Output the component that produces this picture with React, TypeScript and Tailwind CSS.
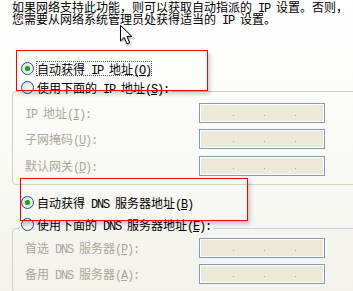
import React from "react";

// half-width latin run, ~6px per char like the dialog's bitmap font
function L({ children }: { children: React.ReactNode }) {
  return (
    <span className="whitespace-pre font-['Liberation_Mono',monospace] leading-[0px] tracking-[-1.2px]">{children}</span>
  );
}

function Radio({ checked }: { checked?: boolean }) {
  return (
    <span className="flex h-[13px] w-[13px] shrink-0 items-center justify-center rounded-full border border-[#1c5180] bg-gradient-to-br from-[#dcdcd5] to-white">
      {checked && <span className="h-[5px] w-[5px] rounded-full bg-[#21a121] shadow-[0_0_1px_#6cd86c]" />}
    </span>
  );
}

function RadioRow({
  checked,
  focused,
  children,
}: {
  checked?: boolean;
  focused?: boolean;
  children: React.ReactNode;
}) {
  return (
    <div className="flex h-[16px] items-center">
      <Radio checked={checked} />
      <span
        className={`ml-[2px] whitespace-nowrap border border-dotted leading-[13px] text-black ${
          focused ? "border-[#555]" : "border-transparent"
        }`}
      >
        {children}
      </span>
    </div>
  );
}

function IpBox() {
  return (
    <div className="flex h-[20px] w-[126px] items-end gap-[30px] border border-[#7f9db9] bg-[#ece9d8] pb-[6px] pl-[33px] shadow-[inset_0_0_0_1px_white]">
      <span className="h-[1px] w-[1px] bg-[#aca899]" />
      <span className="h-[1px] w-[1px] bg-[#aca899]" />
      <span className="h-[1px] w-[1px] bg-[#aca899]" />
    </div>
  );
}

function Field({ label, className = "" }: { label: React.ReactNode; className?: string }) {
  return (
    <div className={`flex h-[20px] items-center ${className}`}>
      <span className="w-[186px] shrink-0 whitespace-nowrap pl-[12px] text-[#aca899]">{label}</span>
      <IpBox />
    </div>
  );
}

export default function App() {
  return (
    <div className="relative h-[291px] w-[353px] overflow-hidden bg-gradient-to-b from-white via-[#fafaf8] to-[#f3f2ec] font-['Noto_Sans_CJK_SC',sans-serif] text-[12px] leading-[16px]">
      <p className="whitespace-nowrap pl-[12px] pt-[1px] leading-[12px] text-black">
        如果网络支持此功能，则可以获取自动指派的<L> IP </L>设置。否则，
        <br />
        您需要从网络系统管理员处获得适当的<L> IP </L>设置。
      </p>

      <div className="ml-[21px] mt-[35px]">
        <RadioRow checked focused>
          自动获得<L> IP </L>地址<L>(<u>O</u>)</L>
        </RadioRow>
      </div>

      <fieldset className="ml-[12px] mt-[3px] w-[360px] rounded-[4px] border border-[#d0d0bf] pb-[8px]">
        <legend className="ml-[6px] px-[2px] pb-[8px]">
          <RadioRow>
            使用下面的<L> IP </L>地址<L>(<u>S</u>):</L>
          </RadioRow>
        </legend>
        <Field label={<><L>IP </L>地址<L>(<u>I</u>):</L></>} />
        <Field className="mt-[6px]" label={<>子网掩码<L>(<u>U</u>):</L></>} />
        <Field className="mt-[7px]" label={<>默认网关<L>(<u>D</u>):</L></>} />
      </fieldset>

      <div className="ml-[21px] mt-[9px]">
        <RadioRow checked>
          自动获得<L> DNS </L>服务器地址<L>(<u>B</u>)</L>
        </RadioRow>
      </div>

      <fieldset className="ml-[12px] mt-[6px] w-[360px] rounded-[4px] border border-[#d0d0bf] pb-[8px]">
        <legend className="ml-[6px] px-[2px] pb-[8px]">
          <RadioRow>
            使用下面的<L> DNS </L>服务器地址<L>(<u>E</u>):</L>
          </RadioRow>
        </legend>
        <Field className="-mt-[2px]" label={<>首选<L> DNS </L>服务器<L>(<u>P</u>):</L></>} />
        <Field className="mt-[6px]" label={<>备用<L> DNS </L>服务器<L>(<u>A</u>):</L></>} />
      </fieldset>

      {/* annotation boxes */}
      <div className="absolute left-[16px] top-[50px] h-[41px] w-[192px] border-[1.5px] border-[#ff0000] shadow-[2px_3px_4px_rgba(0,0,0,0.2)]" />
      <div className="absolute left-[20px] top-[178px] h-[43px] w-[228px] border-[1.5px] border-[#ff0000] shadow-[2px_3px_4px_rgba(0,0,0,0.2)]" />

      {/* mouse cursor */}
      <svg
        className="absolute left-[119px] top-[24px] drop-shadow-[1px_1px_1px_rgba(0,0,0,0.35)]"
        width="14"
        height="22"
        viewBox="0 0 14 22"
      >
        <path
          d="M1.5 1.5 L1.5 17 L5.2 13.4 L8 19.8 L10.6 18.7 L7.9 12.4 L12.8 12.4 Z"
          fill="white"
          stroke="black"
          strokeWidth="1"
          strokeLinejoin="miter"
        />
      </svg>
    </div>
  );
}
